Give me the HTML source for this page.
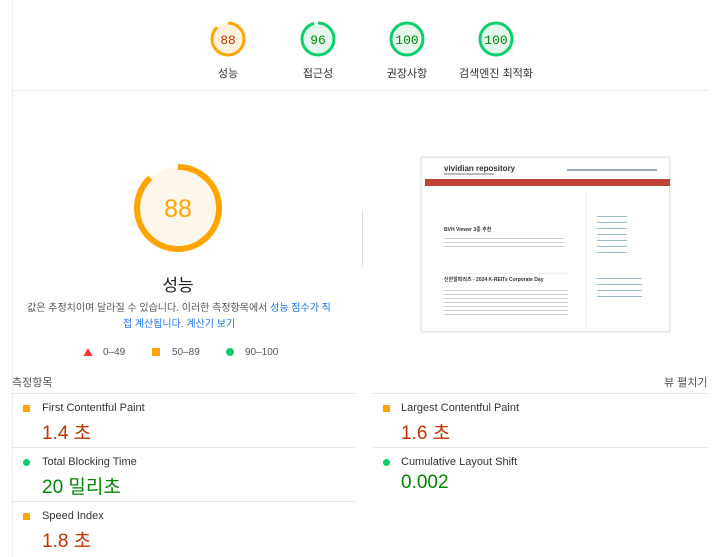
<!DOCTYPE html>
<html><head><meta charset="utf-8"><style>
*{margin:0;padding:0;box-sizing:border-box}
body{width:720px;height:557px;background:#fff;font-family:"Liberation Sans","Noto Sans CJK KR",sans-serif;position:relative;overflow:hidden;color:#212121}
.a{position:absolute}
.lbl{position:absolute;font-size:11px;color:#333;text-align:center;width:100px}
.line{position:absolute;height:1px;background:#e6e6e6}
.t{position:absolute;font-size:11px;color:#333}
.v{position:absolute;font-size:19px}
.sq{position:absolute;width:7px;height:7px;background:#ffa400}
.dot{position:absolute;width:8px;height:8px;border-radius:50%;background:#0cce6b}
</style></head><body>
<div class="a" style="left:12px;top:0;width:1px;height:557px;background:#eee"></div>

<svg class="a" style="left:0;top:0" width="720" height="100">
<circle cx="228" cy="39" r="16" fill="#fff3e0" stroke="#ffa400" stroke-width="3" stroke-dasharray="88.5 100.5" transform="rotate(-90 228 39)"/>
<circle cx="318" cy="39" r="16" fill="#e6f8ee" stroke="#0cce6b" stroke-width="3" stroke-dasharray="96.5 100.5" transform="rotate(-90 318 39)"/>
<circle cx="407" cy="39" r="16" fill="#e6f8ee" stroke="#0cce6b" stroke-width="3"/>
<circle cx="496" cy="39" r="16" fill="#e6f8ee" stroke="#0cce6b" stroke-width="3"/>
<g font-family="Liberation Mono,monospace" font-size="13" text-anchor="middle">
<text x="228" y="44" fill="#c33300">88</text>
<text x="318" y="44" fill="#008800">96</text>
<text x="407" y="44" fill="#008800">100</text>
<text x="496" y="44" fill="#008800">100</text>
</g>
</svg>
<div class="lbl" style="left:178px;top:65px">성능</div>
<div class="lbl" style="left:268px;top:65px">접근성</div>
<div class="lbl" style="left:357px;top:65px">권장사항</div>
<div class="lbl" style="left:446px;top:65px">검색엔진 최적화</div>
<div class="line" style="left:12px;top:90px;width:696px;background:#ececec"></div>

<svg class="a" style="left:120px;top:150px" width="120" height="120">
<circle cx="58" cy="58" r="41" fill="#fff7ec" stroke="#ffa400" stroke-width="6" stroke-dasharray="226.7 257.6" transform="rotate(-90 58 58)"/>
<text x="58" y="67" text-anchor="middle" font-family="Liberation Sans,sans-serif" font-size="25" fill="#ffa400">88</text>
</svg>
<div class="a" style="left:128px;top:271px;width:100px;text-align:center;font-size:17px;color:#222">성능</div>
<div class="a" style="left:24px;top:301px;width:310px;text-align:center;font-size:10px;line-height:16px;color:#555">값은 추정치이며 달라질 수 있습니다. 이러한 측정항목에서 <span style="color:#1a73e8">성능 점수가 직접 계산됩니다</span>. <span style="color:#1a73e8">계산기 보기</span></div>
<svg class="a" style="left:83px;top:347px" width="10" height="10"><polygon points="5,1 9.5,9 0.5,9" fill="#f33"/></svg>
<div class="t" style="left:103px;top:347px;font-size:10px;color:#555">0–49</div>
<div class="sq" style="left:152px;top:348px;width:8px;height:8px"></div>
<div class="t" style="left:172px;top:347px;font-size:10px;color:#555">50–89</div>
<div class="dot" style="left:226px;top:348px"></div>
<div class="t" style="left:245px;top:347px;font-size:10px;color:#555">90–100</div>

<div class="a" style="left:362px;top:210px;width:1px;height:56px;background:#e0e0e0"></div>

<div class="a" style="left:421px;top:157px;width:249px;height:175px;border:1px solid #e6e6e6;background:#fff;box-shadow:0 0 2px #ddd">
<div class="a" style="left:22px;top:6px;font-size:8px;font-weight:bold;color:#333">vividian repository</div>
<div class="a" style="left:22px;top:15px;width:50px;height:2px;background:#bbb"></div>
<div class="a" style="left:145px;top:11px;width:90px;height:2px;background:#9ab"></div>
<div class="a" style="left:3px;top:21px;width:245px;height:7px;background:#c0433a"></div>
<div class="a" style="left:164px;top:36px;width:1px;height:138px;background:#eee"></div>
<div class="a" style="left:22px;top:68px;font-size:5px;font-weight:bold;color:#333">BVH Viewer 3종 추천</div>
<div class="a" style="left:22px;top:80px;width:120px;height:12px;background:repeating-linear-gradient(#ccc 0 1px,#fff 1px 4px)"></div>
<div class="a" style="left:22px;top:115px;width:125px;height:1px;background:#eee"></div>
<div class="a" style="left:22px;top:118px;font-size:5px;font-weight:bold;color:#333">신한알파리츠 - 2024 K-REITs Corporate Day</div>
<div class="a" style="left:22px;top:132px;width:124px;height:26px;background:repeating-linear-gradient(#ccc 0 1px,#fff 1px 4px)"></div>
<div class="a" style="left:175px;top:58px;width:30px;height:40px;background:repeating-linear-gradient(#9bc 0 1px,#fff 1px 6px)"></div>
<div class="a" style="left:175px;top:120px;width:45px;height:22px;background:repeating-linear-gradient(#9bc 0 1px,#fff 1px 6px)"></div>
</div>

<div class="t" style="left:12px;top:374px;color:#555">측정항목</div>
<div class="t" style="left:664px;top:374px;color:#555">뷰 펼치기</div>

<div class="line" style="left:12px;top:393px;width:343px"></div>
<div class="line" style="left:373px;top:393px;width:335px"></div>
<div class="line" style="left:12px;top:447px;width:343px"></div>
<div class="line" style="left:373px;top:447px;width:335px"></div>
<div class="line" style="left:12px;top:501px;width:343px"></div>

<div class="sq" style="left:23px;top:405px"></div>
<div class="t" style="left:42px;top:402px">First Contentful Paint</div>
<div class="v" style="left:42px;top:418px;color:#c33300">1.4 초</div>
<div class="sq" style="left:383px;top:405px"></div>
<div class="t" style="left:401px;top:402px">Largest Contentful Paint</div>
<div class="v" style="left:401px;top:418px;color:#c33300">1.6 초</div>

<div class="dot" style="left:23px;top:459px;width:7px;height:7px"></div>
<div class="t" style="left:42px;top:456px">Total Blocking Time</div>
<div class="v" style="left:42px;top:472px;color:#008800">20 밀리초</div>
<div class="dot" style="left:383px;top:459px;width:7px;height:7px"></div>
<div class="t" style="left:401px;top:456px">Cumulative Layout Shift</div>
<div class="v" style="left:401px;top:472px;color:#008800">0.002</div>

<div class="sq" style="left:23px;top:513px"></div>
<div class="t" style="left:42px;top:510px">Speed Index</div>
<div class="v" style="left:42px;top:526px;color:#c33300">1.8 초</div>
</body></html>
